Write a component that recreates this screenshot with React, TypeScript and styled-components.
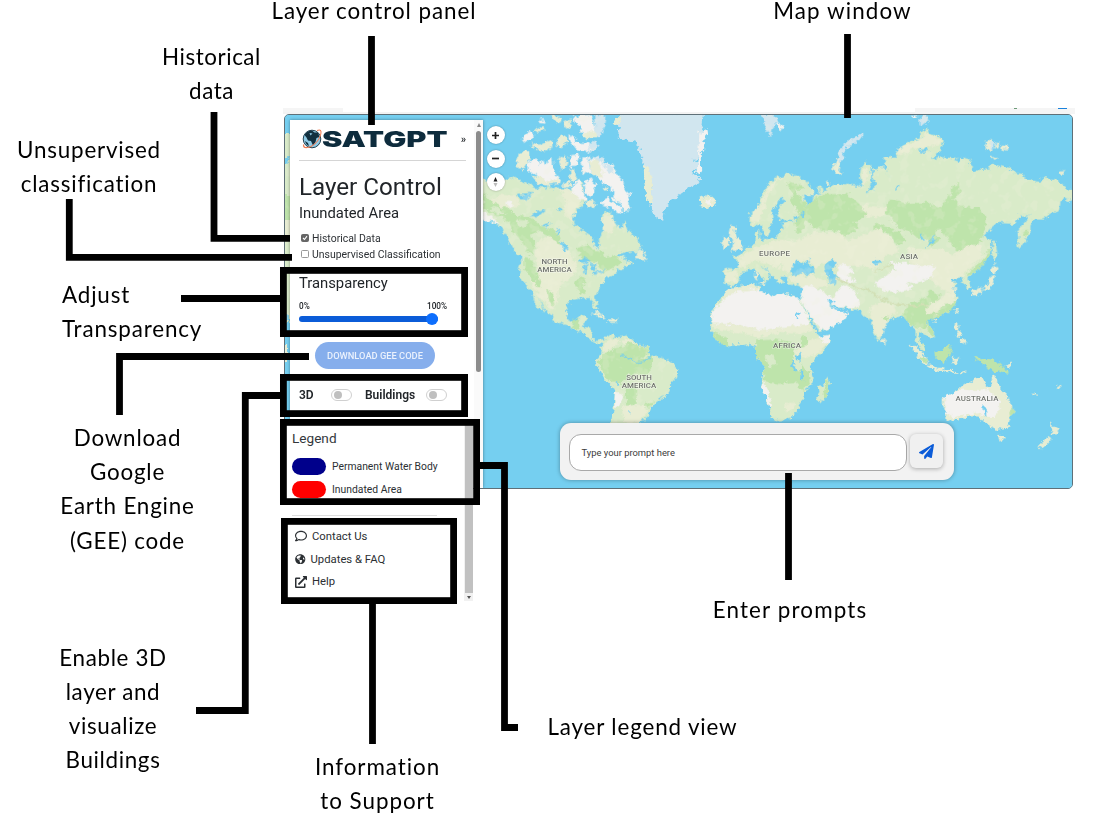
import React from "react";
import styled, { createGlobalStyle } from "styled-components";
import { FaRegComment, FaGlobeAmericas, FaExternalLinkAlt, FaPaperPlane } from "react-icons/fa";

const GlobalStyle = createGlobalStyle`
  * { box-sizing: border-box; }
  body { margin: 0; background: #fff; overflow: hidden; }
`;

const Page = styled.main`
  position: relative;
  width: 1099px;
  height: 823px;
  padding: 108px 0 0 283px;
  overflow: hidden;
  font-family: Roboto, "Liberation Sans", sans-serif;
  color: #212529;
`;

const BrowserEdge = styled.div`
  display: flex;
  justify-content: space-between;
  width: 792px;
  height: 6px;
  background: linear-gradient(#fff 4px, #f3f3f3 4px);
`;

const TabStub = styled.div<{ $w: number; $side: "left" | "right" }>`
  display: flex;
  justify-content: flex-end;
  gap: 41px;
  width: ${(p) => p.$w}px;
  height: ${(p) => (p.$side === "left" ? 4 : 6)}px;
  padding-right: 8px;
  background: #f5f5f5;
`;

const TabMark = styled.i<{ $w: number; $c: string }>`
  width: ${(p) => p.$w}px;
  height: 1px;
  background: ${(p) => p.$c};
`;

const MapWindow = styled.section`
  position: relative;
  display: flex;
  width: 789px;
  height: 375px;
  margin-left: 1px;
  padding: 5px 0 0 5px;
  border: 1px solid #5f7078;
  border-radius: 5px;
  overflow: hidden;
  background: #75cff0;
`;

const MapSvg = styled.svg`
  position: absolute;
  left: -1px;
  top: -1px;
  width: 789px;
  height: 375px;
`;

const Panel = styled.aside`
  position: relative;
  display: flex;
  width: 193px;
  height: 368px;
  background: #fff;
  box-shadow: 0 0 3px rgba(0, 0, 0, 0.4);
`;

const PanelBody = styled.div`
  width: 184px;
  padding: 9px 8px 0 9px;
`;

const LogoRow = styled.div`
  display: flex;
  align-items: center;
  justify-content: space-between;
  height: 32px;
  padding-left: 2px;
  padding-bottom: 11px;
  border-bottom: 1px solid #d5d5d5;
  font-size: 11px;
  font-weight: 500;
`;

const Title = styled.h1`
  margin: 11px 0 0;
  font-size: 24.2px;
  line-height: 30px;
  font-weight: 400;
  white-space: nowrap;
`;

const SubTitle = styled.h2<{ $mt: number; $mb?: number }>`
  margin: ${(p) => p.$mt}px 0 ${(p) => p.$mb ?? 0}px;
  font-size: 14.8px;
  line-height: 18px;
  font-weight: 400;
`;

const CheckRow = styled.label`
  display: flex;
  align-items: center;
  gap: 3px;
  height: 16px;
  padding-left: 2px;
  font-size: 10.45px;
  white-space: nowrap;
  color: #2d3135;
`;

const CheckBox = styled.span<{ $on?: boolean }>`
  display: flex;
  width: 8px;
  height: 8px;
  border: 1px solid ${(p) => (p.$on ? "#666" : "#999")};
  border-radius: 1.5px;
  background: ${(p) => (p.$on ? "#666" : "#fff")};
`;

const RangeLabels = styled.div`
  display: flex;
  justify-content: space-between;
  width: 148px;
  margin-top: 9px;
  font-size: 8.2px;
  line-height: 10px;
  font-weight: 500;
`;

const Slider = styled.div`
  display: flex;
  justify-content: flex-end;
  align-items: center;
  width: 139px;
  height: 6px;
  margin-top: 5px;
  border-radius: 3px;
  background: #0b5cd8;
`;

const Thumb = styled.span`
  width: 12px;
  height: 12px;
  border-radius: 50%;
  background: #0d6efd;
`;

const DownloadButton = styled.button`
  display: block;
  width: 120px;
  height: 27px;
  margin: 20px 0 0 16px;
  padding: 0;
  border: 0;
  border-radius: 14px;
  background: #86aeec;
  color: #eaf1fd;
  font: 500 9.3px Roboto, sans-serif;
`;

const ToggleRow = styled.div`
  display: flex;
  align-items: center;
  height: 16px;
  margin-top: 18px;
  font-size: 12px;
  font-weight: 600;
`;

const ToggleName = styled.span<{ $w: number }>`
  width: ${(p) => p.$w}px;
`;

const Toggle = styled.span<{ $mr?: number }>`
  display: flex;
  align-items: center;
  width: 21px;
  height: 12px;
  margin-right: ${(p) => p.$mr ?? 0}px;
  padding-left: 1.5px;
  border: 1px solid #d0d0d0;
  border-radius: 6px;
  &::before {
    content: "";
    width: 8px;
    height: 8px;
    border-radius: 50%;
    background: #bfbfbf;
  }
`;

const PanelScroll = styled.div`
  display: flex;
  flex-direction: column;
  align-items: center;
  width: 9px;
  padding-top: 3px;
  background: #fafafa;
  &::before {
    content: "";
    border: 2.5px solid transparent;
    border-top: 0;
    border-bottom: 4px solid #888;
  }
  &::after {
    content: "";
    width: 5px;
    height: 241px;
    margin-top: 4px;
    border-radius: 3px;
    background: #8c8c8c;
  }
`;

const MapControls = styled.div`
  position: relative;
  display: flex;
  flex-direction: column;
  gap: 5.5px;
  margin: 6px 0 0 3.5px;
`;

const RoundButton = styled.button`
  display: grid;
  place-items: center;
  width: 18px;
  height: 18px;
  padding: 0;
  border: 0;
  border-radius: 50%;
  background: #fff;
  box-shadow: 0 0 2px rgba(0, 0, 0, 0.35);
`;

const PromptBar = styled.form`
  position: relative;
  display: flex;
  gap: 3px;
  width: 394px;
  height: 57px;
  margin: 303px 0 0 55.5px;
  padding: 11px 9px;
  border-radius: 11px;
  background: #f2f2f2;
  box-shadow: 0 0 4px rgba(0, 0, 0, 0.35);
`;

const PromptInput = styled.div`
  display: flex;
  align-items: center;
  width: 338px;
  height: 37px;
  padding-left: 11.5px;
  border: 1px solid #a9a9a9;
  border-radius: 12px;
  background: #fff;
  color: #3c3c3c;
  font-size: 9.4px;
`;

const SendButton = styled.button`
  display: grid;
  place-items: center;
  width: 33px;
  height: 34px;
  padding: 0;
  border: 0;
  border-radius: 6px;
  background: #f0f0f0;
  color: #0b5cd8;
  box-shadow: 0 1px 4px rgba(0, 0, 0, 0.3);
`;

const LowerPanel = styled.section`
  position: absolute;
  left: 282px;
  top: 421px;
  display: flex;
  width: 191px;
  height: 180px;
`;

const LowerBody = styled.div`
  width: 182px;
  padding: 7px 0 0 10px;
  background: #fff;
`;

const LegendTitle = styled.h3`
  margin: 0 0 10px;
  font-size: 13.6px;
  line-height: 20px;
  font-weight: 400;
  color: #33373b;
`;

const LegendRow = styled.div`
  display: flex;
  align-items: center;
  gap: 6px;
  height: 17px;
  margin-bottom: 6px;
  font-size: 10.35px;
  white-space: nowrap;
  color: #2b2f33;
`;

const Swatch = styled.span<{ $c: string }>`
  width: 34px;
  height: 17px;
  border-radius: 9px;
  background: ${(p) => p.$c};
`;

const Divider = styled.hr`
  width: 145px;
  height: 1px;
  margin: 17px 0 0;
  border: 0;
  background: #ddd;
`;

const SupportLinks = styled.nav`
  display: flex;
  flex-direction: column;
  padding: 9px 0 0 3px;
`;

const SupportLink = styled.a<{ $gap: number }>`
  display: flex;
  align-items: center;
  gap: ${(p) => p.$gap}px;
  height: 22.7px;
  font-size: 11.3px;
  color: #2b2f33;
`;

const LowerScroll = styled.div`
  display: flex;
  flex-direction: column;
  align-items: center;
  width: 9px;
  background: #f1f1f1;
  &::before {
    content: "";
    width: 8px;
    height: 172px;
    background: #c1c1c1;
  }
  &::after {
    content: "";
    margin-top: 3px;
    border: 2px solid transparent;
    border-bottom: 0;
    border-top: 3px solid #555;
  }
`;

const Leaders = styled.svg`
  position: absolute;
  left: 0;
  top: 0;
`;

const Caption = styled.p<{ $x: number; $y: number; $w: number; $left?: boolean; $ls?: number; $lh?: number }>`
  position: absolute;
  left: ${(p) => p.$x}px;
  top: ${(p) => p.$y}px;
  width: ${(p) => p.$w}px;
  margin: 0;
  text-align: ${(p) => (p.$left ? "left" : "center")};
  font-family: Lato, "Liberation Sans", sans-serif;
  font-size: 22.4px;
  line-height: ${(p) => p.$lh ?? 34.2}px;
  letter-spacing: ${(p) => p.$ls ?? 0.65}px;
  white-space: pre;
  color: #000;
`;

const C = { land: "#d9ebc9", cream: "#e8edd3", forest: "#bee4ab", dry: "#f3f2f0", ice: "#d1e6ef", water: "#75cff0" };

const P = ({ d, f }: { d: string; f: string }) => (
  <polygon points={d} fill={f} stroke={f} strokeWidth="3" strokeLinejoin="round" />
);

function NorthAmerica() {
  return (
    <g>
      <P f={C.land} d="0,222 40,225 60,232 80,225 95,215 115,225 135,232 150,238 165,250 200,252 205,240 215,250 240,250 270,255 285,240 300,222 308,240 310,265 318,285 300,305 285,320 277,345 285,365 310,378 335,395 345,425 353,432 360,420 358,400 370,380 372,350 364,328 380,322 392,325 400,345 410,360 425,370 435,348 445,375 460,395 480,410 482,425 470,440 440,440 415,450 435,455 430,470 460,472 430,488 405,500 400,510 375,520 365,540 350,560 342,575 350,598 355,610 350,613 340,600 337,585 325,577 300,580 270,585 258,605 257,630 268,653 285,660 298,640 317,635 320,643 310,655 308,667 332,670 335,685 333,700 350,707 360,703 374,712 365,716 345,710 325,698 318,685 300,677 280,670 265,660 240,655 222,647 218,633 200,617 185,595 175,577 166,562 180,595 195,621 185,613 165,590 160,570 145,545 128,525 118,495 125,460 110,440 100,432 85,405 70,375 50,355 30,345 0,340" />
      <P f={C.cream} d="175,410 210,395 240,420 270,450 290,480 280,510 250,530 235,550 235,590 215,610 200,600 165,555 150,530 175,500 165,450" />
      <P f={C.cream} d="240,255 280,255 310,285 280,320 275,345 250,325 260,290" />
      <P f={C.cream} d="60,270 110,275 120,300 80,310 40,320 20,300" />
      <P f={C.cream} d="370,330 392,330 405,360 395,385 370,380" />
      <P f={C.forest} d="10,260 25,285 50,300 90,315 110,335 150,335 165,350 180,362 225,378 240,400 240,418 200,390 170,375 150,390 165,420 155,450 140,430 120,400 100,380 90,350 60,335 20,315 10,300" />
      <P f={C.land} d="30,305 60,312 75,325 50,328" />
      <P f={C.land} d="110,345 140,348 138,365 115,362" />
      <P f={C.forest} d="290,430 320,420 340,435 365,440 370,455 410,455 420,475 400,490 370,500 350,470 310,465" />
      <P f={C.forest} d="135,460 155,465 168,500 185,545 175,548 155,520 135,495" />
      <P f={C.forest} d="285,535 300,515 315,525 308,545 315,565 300,565 295,550" />
      <P f={C.forest} d="200,555 212,560 222,600 210,590" />
      <P f={C.forest} d="285,645 297,645 296,668 275,668" />
      <P f={C.dry} d="275,245 300,225 310,265 318,285 290,280" />
      <P f={C.dry} d="10,325 40,340 55,355 30,345 10,345" />
      <P f={C.dry} d="80,290 95,288 97,304 84,304" />
      <P f={C.water} d="115,268 155,265 140,285 120,280" />
      <P f={C.water} d="160,325 195,315 180,328 160,336" />
      <P f={C.water} d="190,360 208,355 200,364" />
      <P f={C.water} d="242,410 262,422 264,433 252,438" />
      <P f={C.water} d="292,470 310,457 330,468 312,472" />
      <P f={C.water} d="314,480 320,476 319,505 314,504" />
      <P f={C.water} d="332,477 348,482 343,498 334,490" />
      <P f={C.water} d="340,505 375,492 370,497 345,508" />
      <P f={C.water} d="410,450 460,440 440,448 420,456" />
      <P f={C.water} d="232,375 240,370 234,388" />
      <P f={C.water} d="236,312 242,308 242,318" />
      <P f={C.cream} d="470,442 485,430 498,463 466,458" />
      <P f={C.cream} d="332,625 350,624 375,637 372,642 350,632" />
      <P f={C.cream} d="385,645 410,643 412,652 395,652" />
      {/* arctic archipelago */}
      <P f={C.cream} d="118,145 145,140 148,165 130,192 110,185" />
      <P f={C.dry} d="145,175 165,160 175,180 190,165 195,185 215,155 220,200 240,225 200,235 190,238 165,205 148,198" />
      <P f={C.cream} d="160,215 180,215 200,232 235,222 238,232 200,240 175,236" />
      <P f={C.cream} d="155,115 180,120 215,110 210,132 185,138 155,125" />
      <P f={C.dry} d="127,100 140,85 152,78 160,90 145,110 132,108" />
      <P f={C.cream} d="237,160 252,150 262,165 258,180 245,195" />
      <P f={C.dry} d="272,152 295,150 290,178 275,185" />
      <P f={C.cream} d="230,100 250,92 262,110 245,125 230,120" />
      <P f={C.dry} d="268,90 280,100 300,115 350,115 352,135 320,140 290,135 268,105" />
      <P f={C.cream} d="268,195 280,190 290,225 275,230" />
      <P f={C.dry} d="305,160 325,158 330,200 310,205" />
      <P f={C.dry} d="330,165 350,155 370,175 395,180 415,215 430,230 428,250 450,270 440,290 450,310 430,315 420,290 400,285 405,260 375,235 355,220 335,205" />
      <P f={C.cream} d="332,170 350,165 365,195 370,215 350,215 335,205" />
      <P f={C.dry} d="365,290 385,283 415,300 430,325 405,315 370,297" />
      <P f={C.dry} d="315,230 335,222 345,245 330,275 318,265" />
      <P f={C.cream} d="320,290 340,290 345,305 325,303" />
      <P f={C.cream} d="250,235 265,225 270,245 255,248" />
      <P f={C.cream} d="215,30 245,35 240,52 225,48" />
      <P f={C.dry} d="280,35 330,30 340,60 345,85 310,95 300,60 285,50" />
      <P f={C.ice} d="345,30 378,32 375,60 360,95 340,90 345,65" />
      <P f={C.cream} d="250,55 272,45 270,68 255,65" />
      <P f={C.cream} d="305,85 345,80 350,95 310,98" />
      <P f={C.ice} d="325,115 350,112 355,130 330,138" />
      <P f={C.ice} d="370,178 392,185 402,205 385,200" />
      <P f={C.ice} d="345,158 368,158 370,170 350,168" />
      <P f={C.cream} d="165,75 190,68 192,76 170,82" />
      <P f={C.dry} d="175,48 190,43 192,52" />
      <P f={C.cream} d="372,245 378,248 376,256 370,254" />
    </g>
  );
}

function Greenland() {
  return (
    <g>
      <P f={C.ice} d="430,25 405,50 420,70 415,95 440,105 465,108 478,130 487,160 495,200 510,225 518,250 515,280 510,300 520,325 548,348 552,320 562,295 585,280 603,262 650,235 660,222 635,205 655,180 640,165 662,150 658,125 670,100 665,70 670,25" />
      <P f={C.cream} d="395,55 420,35 425,48 405,60" />
      <P f={C.cream} d="492,180 506,190 512,230 515,262 512,295 500,275 495,235" />
      <P f={C.dry} d="660,80 678,75 680,90 668,110 675,130 660,140 662,200 650,205 655,160" />
      <P f={C.cream} d="655,285 668,278 672,290 690,275 707,285 700,303 680,307 665,298" />
      <P f={C.dry} d="672,290 690,286 692,298 678,298" />
    </g>
  );
}

function SouthAmerica() {
  return (
    <g transform="translate(0 555)">
      <P f={C.land} d="370,155 378,142 398,133 405,143 440,140 460,150 475,165 500,170 512,190 505,205 520,200 550,208 580,220 594,240 590,260 570,280 567,305 550,320 525,335 520,350 505,370 495,388 475,392 480,400 470,430 395,430 400,380 403,345 407,300 395,285 375,270 365,250 350,225 353,205 365,190 367,170" />
      <P f={C.cream} d="375,160 395,145 420,155 395,175 372,185" />
      <P f={C.cream} d="425,150 455,150 465,175 450,180" />
      <P f={C.forest} d="372,188 395,182 410,172 430,170 450,160 480,170 500,172 510,190 462,210 515,205 512,235 495,255 445,250 425,280 400,275 380,262 368,240 358,215" />
      <P f={C.forest} d="440,295 470,292 472,340 445,345 435,320" />
      <P f={C.cream} d="428,350 490,345 500,370 475,395 440,400 430,380" />
      <P f={C.dry} d="406,305 418,310 428,325 418,345 405,355" />
      <P f={C.forest} d="490,345 520,335 515,350 500,350" />
      <path d="M420 195Q445 198 460 213T520 198" fill="none" stroke={C.water} strokeWidth="3.500" />
      <circle cx="411" cy="283" r="4" fill={C.water} />
      <circle cx="445" cy="367" r="3.5" fill={C.water} />
    </g>
  );
}

function Africa() {
  return (
    <g transform="translate(660 555)">
      <P f={C.land} d="75,12 85,-3 110,-8 150,-15 178,-13 180,5 200,12 228,25 235,12 260,15 290,22 300,32 320,70 330,95 345,120 357,140 392,135 385,160 370,180 345,205 333,222 330,240 338,270 335,285 310,305 308,330 295,345 290,365 270,385 225,392 215,365 205,340 200,315 185,290 190,260 195,240 185,215 170,200 175,180 165,170 150,160 125,165 100,165 80,170 55,155 40,130 32,115 38,95 32,80 40,60 60,30" />
      <P f={C.dry} d="75,25 110,0 170,-8 180,5 200,12 228,25 235,12 290,22 300,32 320,75 328,100 300,108 250,110 180,120 110,102 40,100 34,80 42,60" />
      <P f={C.cream} d="40,103 110,105 180,122 250,113 325,104 338,118 300,130 240,128 180,140 110,125 40,115" />
      <P f={C.cream} d="75,12 85,-3 150,-15 176,-12 172,-4 110,2 85,20 70,30" />
      <P f={C.cream} d="335,150 370,145 380,160 345,195 320,200 280,185 290,180 320,160" />
      <P f={C.dry} d="360,140 392,136 380,165" />
      <P f={C.forest} d="42,132 75,140 85,160 78,169 55,155" />
      <P f={C.forest} d="170,153 225,150 280,158 278,190 275,212 288,240 302,250 302,225 325,245 328,282 308,300 285,275 240,280 192,272 196,240 185,215 170,198" />
      <P f={C.land} d="195,200 220,195 225,222 205,228" />
      <P f={C.forest} d="303,142 320,140 318,165 305,170" />
      <P f={C.dry} d="188,278 200,300 215,345 210,355 200,315 185,292" />
      <P f={C.cream} d="255,340 285,340 275,365 255,355" />
      <P f={C.water} d="290,195 306,193 303,210 288,208" />
      <P f={C.water} d="277,212 288,240 284,244 275,222" />
      <P f={C.water} d="303,245 308,248 308,275 302,270" />
      <P f={C.water} d="288,78 297,66 297,74 290,82" />
      <circle cx="119" cy="157" r="4" fill={C.water} />
      <P f={C.land} d="385,263 388,280 380,310 372,328 362,335 353,325 360,305 358,290 375,282" />
      <P f={C.forest} d="384,268 386,285 374,325 372,310" />
    </g>
  );
}

function Eurasia() {
  return (
    <g transform="translate(660 0)">
      <P f={C.land} d="75,490 112,493 118,480 112,464 98,455 115,457 130,440 150,425 168,415 172,405 165,385 175,373 178,390 180,405 205,403 232,400 238,380 250,367 245,358 275,352 285,346 270,343 240,345 232,330 240,300 255,285 245,278 230,285 225,305 212,320 218,345 208,365 205,388 192,388 188,365 180,355 160,368 150,350 152,325 175,310 185,280 195,255 205,240 220,225 245,215 270,206 290,215 320,235 340,255 335,272 305,266 312,285 322,302 335,290 340,277 362,268 357,245 368,250 370,262 395,245 440,238 475,240 490,250 480,210 485,185 498,172 510,185 512,215 510,240 500,268 525,250 530,235 520,220 520,190 528,195 550,185 560,200 568,225 555,160 590,155 600,130 630,110 660,102 665,82 682,72 692,90 720,95 728,110 725,130 690,168 720,158 755,160 780,170 785,158 810,165 810,180 822,205 840,195 870,195 875,178 900,185 930,190 940,205 970,208 975,225 1020,232 1025,220 1070,225 1095,245 1117,265 1115,290 1090,275 1080,290 1075,318 1050,325 1030,342 1000,342 990,365 990,385 975,405 958,430 955,380 970,355 998,322 985,330 960,330 945,355 890,352 870,370 845,398 870,405 872,440 850,480 832,498 800,517 812,545 798,553 795,530 780,515 755,520 755,530 775,537 760,550 770,575 770,585 760,605 745,620 715,630 700,640 685,643 680,655 700,675 700,693 688,700 670,685 655,675 652,695 665,713 675,735 668,740 655,720 648,700 648,680 645,660 632,663 620,635 610,630 590,640 570,640 548,660 548,680 537,707 525,695 510,640 490,630 480,615 450,610 415,607 395,597 380,580 388,598 405,615 440,625 430,645 400,665 360,680 350,670 330,630 306,598 302,580 310,565 313,545 290,540 265,537 262,515 275,510 245,515 248,530 235,535 225,515 210,505 195,488 180,480 200,500 212,518 205,520 195,532 192,515 170,500 165,490 150,490 125,503 115,525 100,542 75,535" />
      {/* taiga and cooler forests */}
      <P f={C.forest} d="260,235 300,240 310,250 285,255 300,280 320,300 350,278 375,270 440,268 480,300 500,325 480,345 460,350 475,365 435,395 430,415 420,375 370,375 345,365 315,345 305,375 290,385 285,350 300,330 275,295 280,265" />
      <P f={C.forest} d="570,285 610,295 680,295 720,310 745,275 770,290 775,305 840,310 858,340 855,372 845,395 830,400 845,410 800,425 780,450 760,420 720,370 700,380 720,400 690,425 680,400 650,395 625,375 600,370 580,350 555,315" />
      <P f={C.forest} d="530,355 570,370 600,385 620,405 600,420 580,405 560,380 520,370" />
      <P f={C.forest} d="755,250 775,235 778,260 765,280 750,275" />
      <P f={C.forest} d="868,430 872,445 850,480 832,498 800,512 820,490 850,465" />
      <P f={C.forest} d="970,385 980,375 982,385 972,398" />
      {/* temperate plains */}
      <P f={C.cream} d="120,455 165,430 240,405 280,410 340,385 420,385 440,410 540,370 570,400 600,440 560,450 520,490 460,480 410,500 400,465 370,475 345,490 325,465 285,470 270,500 225,490 175,465 150,470 140,485 115,490" />
      <P f={C.cream} d="78,497 110,497 108,530 82,530" />
      <P f={C.cream} d="265,515 340,510 380,530 380,545 320,545 285,535" />
      <P f={C.cream} d="620,430 680,435 720,430 760,450 800,425 840,420 850,450 820,480 790,510 755,520 765,560 740,560 700,530 640,490" />
      <P f={C.cream} d="155,325 180,305 205,245 250,215 225,235 205,265 190,315 175,350 158,355" />
      <P f={C.cream} d="590,135 660,105 680,80 690,95 720,100 722,115 680,125 640,130 600,150" />
      <P f={C.cream} d="485,300 560,310 550,335 500,335" />
      <P f={C.cream} d="485,205 495,190 505,215 490,240" />
      <P f={C.cream} d="510,610 540,590 575,600 590,620 560,650 545,690 530,695 520,665" />
      <P f={C.forest} d="548,640 565,630 560,645" />
      {/* arid basins */}
      <P f={C.dry} d="420,480 440,478 460,500 440,510 470,530 440,535 410,520" />
      <P f={C.dry} d="310,545 340,545 375,565 400,580 430,540 465,560 480,600 450,608 415,605 395,595 380,580 388,598 405,615 440,625 430,645 400,665 362,676 345,650 312,600 306,580" />
      <P f={C.dry} d="525,535 560,510 590,495 570,475 620,475 650,485 710,485 690,515 660,530 620,535 640,550 590,560 550,555" />
      <P f={C.forest} d="610,630 625,600 640,595 680,580 690,555 720,570 715,585 735,600 765,595 758,610 720,630 700,640 685,643 675,670 650,665 630,655" />
      <P f={C.cream} d="680,605 715,590 740,565 760,560 765,590 730,600 710,625 680,625" />
      <P f={C.forest} d="682,660 700,675 698,690 685,675" />
      <path d="M500 550Q540 585 580 595T680 600M520 500L575 480M380 500Q450 545 500 555" fill="none" stroke="#d2dfb4" strokeWidth="5" />
      <path d="M165 478Q190 468 210 482T245 475Q255 495 240 500M110 495L140 502" fill="none" stroke={C.land} strokeWidth="4" />
      {/* inland water */}
      <P f={C.water} d="272,503 282,475 292,468 305,478 328,465 325,480 343,495 338,505 300,505 280,510" />
      <P f={C.water} d="375,482 395,466 406,470 403,484 392,490 408,518 406,538 390,535 387,510 377,497" />
      <P f={C.water} d="515,474 530,467 545,470 518,478" />
      <P f={C.water} d="706,390 700,408 680,426 692,405" />
      <P f={C.water} d="662,387 670,392 673,410 665,403" />
      <P f={C.water} d="587,250 596,240 597,245 588,254" />
      <P f={C.water} d="283,332 295,336 294,346 283,342" />
      <P f={C.water} d="306,317 311,321 312,336 307,332" />
      <P f={C.water} d="657,135 678,130 683,138 662,145" />
      <P f={C.water} d="380,582 388,596 400,592 394,584" />
      {/* islands */}
      <P f={C.cream} d="92,363 105,366 103,378 110,395 125,413 127,430 93,438 102,425 95,415 100,402 88,385" />
      <P f={C.cream} d="70,402 87,395 86,422 68,430" />
      <P f={C.cream} d="0,285 12,280 25,273 45,280 45,293 25,307 5,300" />
      <P f={C.dry} d="20,288 36,285 34,298 22,297" />
      <P f={C.ice} d="483,86 490,95 470,108 448,120 430,140 425,165 412,170 415,150 425,125 445,108" />
      <P f={C.cream} d="410,165 422,170 415,190 425,205 412,207 398,190" />
      <P f={C.ice} d="185,30 225,32 230,55 215,65 210,92 200,75 195,55" />
      <P f={C.dry} d="230,55 248,62 240,78" />
      <P f={C.ice} d="660,40 675,30 684,50 660,60" />
      <P f={C.dry} d="630,28 650,30 640,38" />
      <P f={C.cream} d="855,110 870,106 882,115 875,135 860,133" />
      <P f={C.ice} d="872,110 882,112 882,128 874,130" />
      <P f={C.cream} d="885,115 896,115 893,130" />
      <P f={C.cream} d="904,122 925,127 922,136 908,132" />
      <P f={C.cream} d="874,153 888,158 885,164" />
      <P f={C.cream} d="1078,198 1094,197 1090,204 1078,204" />
      <P f={C.land} d="880,410 887,415 890,445 884,470 880,450" />
      <P f={C.cream} d="875,492 882,478 895,490 885,505 876,502" />
      <P f={C.cream} d="868,515 880,512 878,535 870,552 850,552 852,545 865,540" />
      <P f={C.cream} d="825,555 845,548 843,560 822,570 817,562" />
      <P f={C.cream} d="167,500 173,510 171,525 166,522" />
      <P f={C.cream} d="180,535 195,532 193,540" />
      <P f={C.cream} d="548,702 556,705 555,718 548,716" />
      <circle cx="384" cy="232" r="6" fill={C.cream} />
    </g>
  );
}

function Oceania() {
  return (
    <g transform="translate(1230 555)">
      <P f={C.cream} d="160,325 185,312 205,300 215,290 230,278 245,280 250,265 275,262 280,278 300,295 305,290 308,260 315,258 320,280 330,290 335,305 350,318 368,345 370,365 360,385 350,410 325,418 300,410 290,390 275,390 262,375 240,375 215,385 190,388 172,395 168,365 160,345" />
      <P f={C.dry} d="165,322 185,312 215,300 270,305 290,295 325,330 328,360 315,380 290,378 265,368 220,375 190,380 168,365" />
      <P f={C.forest} d="366,350 370,365 362,380 360,370" />
      <P f={C.water} d="282,350 289,352 290,383 285,372" />
      <P f={C.cream} d="326,436 343,437 336,455 329,450" />
      <P f={C.cream} d="480,398 488,410 504,415 496,430 485,432 488,415" />
      <P f={C.cream} d="478,438 482,448 465,470 450,477 443,470 462,452" />
      <P f={C.forest} d="135,190 160,178 178,162 182,185 172,210 155,215 140,205" />
      <P f={C.forest} d="90,160 100,165 106,185 97,184" />
      <P f={C.cream} d="60,165 78,175 105,200 117,225 105,222 85,200" />
      <P f={C.forest} d="90,198 108,205 112,220 98,210" />
      <P f={C.cream} d="115,228 150,235 162,238 155,242 120,235" />
      <P f={C.forest} d="255,198 275,208 310,210 330,222 340,235 352,250 325,240 305,242 285,222 265,215" />
      <P f={C.cream} d="190,205 205,205 198,220 190,222" />
      <P f={C.cream} d="197,98 204,100 203,118 194,115" />
      <P f={C.cream} d="212,148 225,150 222,162 212,160" />
      <P f={C.cream} d="200,122 215,130 212,140 203,135" />
      <P f={C.cream} d="195,58 201,56 199,70" />
      <P f={C.cream} d="133,88 142,92 136,98" />
      <P f={C.cream} d="165,242 185,241 200,247 170,245" />
      <P f={C.cream} d="210,248 228,243 215,252" />
      <P f={C.cream} d="430,307 440,316 434,314" />
      <P f={C.cream} d="345,228 365,222 360,230" />
      <P f={C.cream} d="248,12 262,5 258,14" />
      <P f={C.cream} d="500,290 512,286 505,294" />
    </g>
  );
}

function WrappedEdge() {
  return (
    <g>
      <rect x="278" y="133" width="16" height="190" fill={C.land} />
      <rect x="278" y="195" width="16" height="25" fill={C.forest} />
      <rect x="278" y="220" width="16" height="20" fill={C.cream} />
      <rect x="278" y="345" width="9" height="16" fill={C.cream} />
      <path d="M283 162l7 -6v3l-6 6zM283 312l7 5v6l-7-4z" fill={C.water} />
    </g>
  );
}

const mapLabels: [number, number, string, number][] = [
  [554.5, 263.8, "NORTH", 26], [554.5, 272, "AMERICA", 34.500], [639, 380, "SOUTH", 25.500], [639, 388.200, "AMERICA", 34.500],
  [774.5, 256, "EUROPE", 31], [909, 259.200, "ASIA", 18], [787, 348.200, "AFRICA", 28], [977, 400.800, "AUSTRALIA", 43],
];

function WorldMap() {
  return (
    <MapSvg viewBox="284 114 789 375">
      <defs>
        <filter id="coast" filterUnits="userSpaceOnUse" x="270" y="100" width="820" height="400" colorInterpolationFilters="sRGB">
          <feTurbulence type="fractalNoise" baseFrequency="0.2" numOctaves="3" seed="4" result="n" />
          <feDisplacementMap in="SourceGraphic" in2="n" scale="7" xChannelSelector="R" yChannelSelector="G" />
        </filter>
        <filter id="terrain" filterUnits="userSpaceOnUse" x="270" y="100" width="820" height="400" colorInterpolationFilters="sRGB">
          <feTurbulence type="fractalNoise" baseFrequency="0.2" numOctaves="3" seed="4" result="n" />
          <feDisplacementMap in="SourceGraphic" in2="n" scale="7" xChannelSelector="R" yChannelSelector="G" result="land" />
          <feTurbulence type="fractalNoise" baseFrequency="0.09" numOctaves="3" seed="9" />
          <feColorMatrix values="0 0 0 0 0.94 0 0 0 0 0.94 0 0 0 0 0.87 9 0 0 0 -4.9" />
          <feComponentTransfer><feFuncA type="linear" slope="0.2" /></feComponentTransfer>
          <feComposite in2="land" operator="atop" />
        </filter>
      </defs>
      <rect x="280" y="110" width="800" height="385" fill={C.water} />
      <g filter="url(#coast)">
        <g transform="translate(480 105) scale(0.33333)">
          <Greenland />
          <Africa />
          <Oceania />
        </g>
      </g>
      <g filter="url(#terrain)">
        <WrappedEdge />
        <g transform="translate(480 105) scale(0.33333)">
          <NorthAmerica />
          <SouthAmerica />
          <Eurasia />
        </g>
      </g>
      <g fontFamily="Roboto, sans-serif" fontSize="7.900" fontWeight="500" textAnchor="middle" fill="#70736d" stroke="#fff" strokeOpacity="0.5" strokeWidth="1.2" paintOrder="stroke">
        {mapLabels.map(([x, y, t, w]) => (
          <text key={`${x}${y}`} x={x} y={y} textLength={w}>{t}</text>
        ))}
      </g>
    </MapSvg>
  );
}

function Logo() {
  return (
    <svg width="148" height="28" viewBox="0 -3 148 28" style={{ overflow: "visible" }}>
      <circle cx="11" cy="11" r="8.8" fill="#8fcbe6" stroke="#12303f" strokeWidth="0.9" />
      <path d="M3.500 7Q6 2.500 11 2.400L13.500 4.500L17 4.500L18.500 9L15.500 10L14.500 14L12 17.500L10 13L7 12.500L5.500 9.500Z" fill="#12303f" />
      <path d="M4 13l3 2 1 3q-3-1-4-5z" fill="#12303f" />
      <path d="M8.500 5l3 .5-2 2z" fill="#8fcbe6" />
      <path d="M16 2.500Q21 0.500 19.800 6Q18 14 10 18.500Q2 21.500 2.500 16.500" fill="none" stroke="#ee7b52" strokeWidth="1.100" />
      <text x="21" y="19" fontFamily="Inter, Roboto, sans-serif" fontWeight="900" fontSize="21.400" fill="#0e2c3d" textLength="125.500" lengthAdjust="spacingAndGlyphs">SATGPT</text>
    </svg>
  );
}

const leaderPaths = [
  "M371.500 36V125", "M847.500 34V118", "M788.500 473V580", "M372.500 603V744",
  "M214 112V238.300H290", "M69.300 199V257.300H292", "M181 298.500H281", "M119.500 415V356.500H309",
  "M281 395.500H245.300V710.500H196", "M479 465.500H504.500V727.500H518",
];
const frames = [[280, 267, 188, 70], [280, 374, 188, 43], [280, 419, 200, 86], [281, 518, 176, 86]];

const captions: { x: number; y: number; w: number; t: string; left?: boolean; ls?: number; lh?: number }[] = [
  { x: 254, y: 0.500, w: 240, t: "Layer control panel", ls: 0.95, lh: 20 },
  { x: 742.500, y: 0.500, w: 200, t: "Map window", ls: 1.100, lh: 20 },
  { x: 131.500, y: 39.500, w: 160, t: "Historical\ndata", ls: 0.550 },
  { x: 0, y: 132.500, w: 178, t: "Unsupervised\nclassification", ls: 0.800 },
  { x: 62, y: 277.500, w: 160, t: "Adjust\nTransparency", left: true, ls: 0.850 },
  { x: 37.500, y: 421, w: 180, t: "Download\nGoogle\nEarth Engine\n(GEE) code", ls: 0.800 },
  { x: 33, y: 640.500, w: 160, t: "Enable 3D\nlayer and\nvisualize\nBuildings" },
  { x: 297.500, y: 750, w: 160, t: "Information\nto Support", ls: 0.950 },
  { x: 690, y: 593, w: 200, t: "Enter prompts", ls: 1.150 },
  { x: 532.500, y: 709.500, w: 220, t: "Layer legend view", ls: 0.850 },
];

export default function App() {
  return (
    <Page>
      <GlobalStyle />
      <BrowserEdge>
        <TabStub $w={60} $side="left" />
        <TabStub $w={160} $side="right">
          <TabMark $w={3} $c="#6d9b78" />
          <TabMark $w={9} $c="#1a82dc" />
        </TabStub>
      </BrowserEdge>
      <MapWindow>
        <WorldMap />
        <Panel>
          <PanelBody>
            <LogoRow><Logo />»</LogoRow>
            <Title>Layer Control</Title>
            <SubTitle $mt={2} $mb={8}>Inundated Area</SubTitle>
            <CheckRow>
              <CheckBox $on>
                <svg width="6" height="6" viewBox="0 0 6 6"><path d="M1 3l1.500 1.500L5 1.200" fill="none" stroke="#fff" strokeWidth="1.100" /></svg>
              </CheckBox>
              Historical Data
            </CheckRow>
            <CheckRow><CheckBox />Unsupervised Classification</CheckRow>
            <SubTitle $mt={12}>Transparency</SubTitle>
            <RangeLabels><span>0%</span><span>100%</span></RangeLabels>
            <Slider><Thumb /></Slider>
            <DownloadButton type="button">DOWNLOAD GEE CODE</DownloadButton>
            <ToggleRow>
              <ToggleName $w={32}>3D</ToggleName>
              <Toggle $mr={13} />
              <ToggleName $w={61}>Buildings</ToggleName>
              <Toggle />
            </ToggleRow>
          </PanelBody>
          <PanelScroll />
        </Panel>
        <MapControls>
          <RoundButton><svg width="9" height="9"><path d="M4.500 1v7M1 4.500h7" stroke="#222" strokeWidth="1.700" /></svg></RoundButton>
          <RoundButton><svg width="9" height="9"><path d="M1 4.500h7" stroke="#222" strokeWidth="1.700" /></svg></RoundButton>
          <RoundButton><svg width="9" height="12"><path d="M4.500 1l2 4.500h-4z" fill="#222" /><path d="M4.500 11l2-4h-4z" fill="#bbb" /></svg></RoundButton>
        </MapControls>
        <PromptBar>
          <PromptInput>Type your prompt here</PromptInput>
          <SendButton type="button"><FaPaperPlane size={15} /></SendButton>
        </PromptBar>
      </MapWindow>
      <LowerPanel>
        <LowerBody>
          <LegendTitle>Legend</LegendTitle>
          <LegendRow><Swatch $c="#00008b" />Permanent Water Body</LegendRow>
          <LegendRow><Swatch $c="#f00" />Inundated Area</LegendRow>
          <Divider />
          <SupportLinks>
            <SupportLink $gap={5}><FaRegComment size={12} />Contact Us</SupportLink>
            <SupportLink $gap={5}><FaGlobeAmericas size={10.500} />Updates &amp; FAQ</SupportLink>
            <SupportLink $gap={5}><FaExternalLinkAlt size={12} />Help</SupportLink>
          </SupportLinks>
        </LowerBody>
        <LowerScroll />
      </LowerPanel>
      <Leaders width="1099" height="823" fill="none" stroke="#000" strokeWidth="6.800">
        {leaderPaths.map((d) => <path key={d} d={d} />)}
        {frames.map(([x, y, w, h]) => (
          <rect key={y} x={x + 3.400} y={y + 3.400} width={w - 6.800} height={h - 6.800} />
        ))}
      </Leaders>
      {captions.map((c) => (
        <Caption key={c.t} $x={c.x} $y={c.y} $w={c.w} $left={c.left} $ls={c.ls} $lh={c.lh}>{c.t}</Caption>
      ))}
    </Page>
  );
}
